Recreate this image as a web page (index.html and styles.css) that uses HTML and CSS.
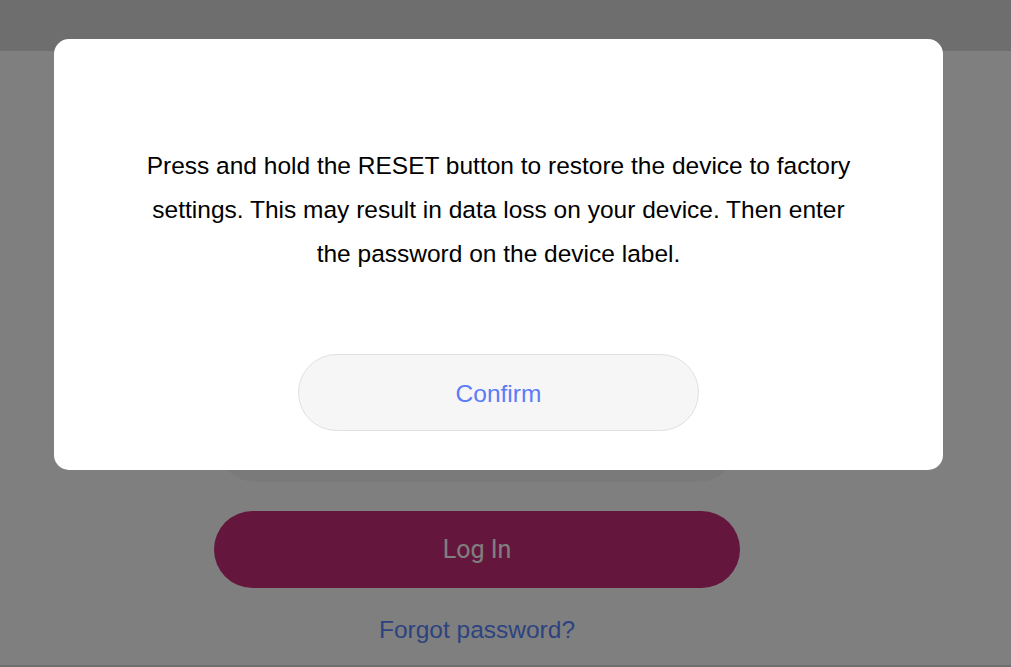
FILE: index.html
```html
<!DOCTYPE html>
<html>
<head>
<meta charset="utf-8">
<link rel="stylesheet" href="styles.css">
</head>
<body>
<div class="page">
  <header class="topbar"></header>
  <main class="form">
    <div class="field"></div>
    <button class="login">Log In</button>
    <a class="forgot" href="#">Forgot password?</a>
  </main>
  <footer class="bottombar"></footer>
</div>
<div class="overlay">
  <div class="modal">
    <p class="message">Press and hold the RESET button to restore the device to factory settings. This may result in data loss on your device. Then enter the password on the device label.</p>
    <button class="confirm">Confirm</button>
  </div>
</div>
</body>
</html>
```
FILE: styles.css
```css
html, body {
  margin: 0;
  padding: 0;
  height: 100%;
  overflow: hidden;
}
body {
  background: #ffffff;
  font-family: "Liberation Sans", Arial, sans-serif;
}
.page {
  height: 667px;
  display: flex;
  flex-direction: column;
}
.topbar {
  height: 51px;
  background: #dcdcdc;
  flex: none;
}
.form {
  flex: 1;
  display: flex;
  flex-direction: column;
  align-items: center;
  padding-top: 354px;
  margin-left: -57px;
}
.field {
  width: 520px;
  height: 77px;
  border-radius: 38px;
  background: #f4f4f4;
}
.login {
  margin-top: 29px;
  width: 526px;
  height: 77px;
  border: none;
  border-radius: 39px;
  background: #ca2c7a;
  color: #ffffff;
  font-family: Roboto, "Liberation Sans", sans-serif;
  font-size: 25px;
}
.forgot {
  margin-top: 29px;
  color: #5a87ff;
  text-decoration: none;
  font-size: 24.5px;
  line-height: 26px;
}
.bottombar {
  height: 2px;
  background: #dcdcdc;
  flex: none;
}
.overlay {
  position: fixed;
  inset: 0;
  background: rgba(0, 0, 0, 0.5);
  padding: 39px 0 0 54px;
}
.modal {
  width: 889px;
  height: 431px;
  box-sizing: border-box;
  background: #ffffff;
  border-radius: 15px;
  padding: 105px 84px 0;
  display: flex;
  flex-direction: column;
  align-items: center;
}
.message {
  margin: 0;
  text-align: center;
  font-size: 24.5px;
  line-height: 44px;
  color: #000000;
}
.confirm {
  margin-top: 78px;
  width: 401px;
  height: 77px;
  padding: 3px 0 0;
  border: 1px solid #e0e0e0;
  border-radius: 39px;
  background: #f6f6f6;
  color: #5b7cf6;
  font-family: "Liberation Sans", Arial, sans-serif;
  font-size: 24.5px;
}
```
